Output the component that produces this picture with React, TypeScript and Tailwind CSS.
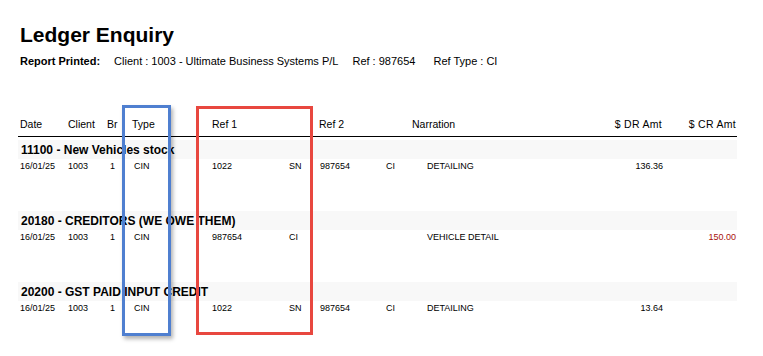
const headers = [
  { label: "Date", align: "left" },
  { label: "Client", align: "left" },
  { label: "Br", align: "left" },
  { label: "Type", align: "left" },
  { label: "Ref 1", align: "left" },
  { label: "Ref 2", align: "left" },
  { label: "Narration", align: "left" },
  { label: "$ DR Amt", align: "right" },
  { label: "$ CR Amt", align: "right" },
];

interface Entry {
  account: string;
  date: string;
  client: string;
  br: string;
  type: string;
  ref1: string;
  ref1Type: string;
  ref2: string;
  ref2Type: string;
  narration: string;
  dr: string;
  cr: string;
}

const entries: Entry[] = [
  {
    account: "11100 - New Vehicles stock",
    date: "16/01/25",
    client: "1003",
    br: "1",
    type: "CIN",
    ref1: "1022",
    ref1Type: "SN",
    ref2: "987654",
    ref2Type: "CI",
    narration: "DETAILING",
    dr: "136.36",
    cr: "",
  },
  {
    account: "20180 - CREDITORS (WE OWE THEM)",
    date: "16/01/25",
    client: "1003",
    br: "1",
    type: "CIN",
    ref1: "987654",
    ref1Type: "CI",
    ref2: "",
    ref2Type: "",
    narration: "VEHICLE DETAIL",
    dr: "",
    cr: "150.00",
  },
  {
    account: "20200 - GST PAID INPUT CREDIT",
    date: "16/01/25",
    client: "1003",
    br: "1",
    type: "CIN",
    ref1: "1022",
    ref1Type: "SN",
    ref2: "987654",
    ref2Type: "CI",
    narration: "DETAILING",
    dr: "13.64",
    cr: "",
  },
];

export default function App() {
  return (
    <div className="relative w-[763px] h-[356px] overflow-hidden bg-white text-black font-['Liberation_Sans',Arial,sans-serif]">
      <div className="pl-[20px] pt-[23px]">
        <h1 className="text-[21px] leading-[24px] font-bold">Ledger Enquiry</h1>
        <div className="mt-[8px] flex text-[11px] leading-[12px]">
          <span className="font-bold">Report Printed:</span>
          <span className="ml-[14px]">Client : 1003 - Ultimate Business Systems P/L</span>
          <span className="ml-[14px]">Ref : 987654</span>
          <span className="ml-[18px]">Ref Type : CI</span>
        </div>
      </div>

      <div className="ml-[18px] mt-[51px] w-[719px]">
        <div className="grid grid-cols-[48px_39px_25px_80px_107px_93px_188px_62px_74px] pl-[2px] pb-[6px] border-b border-black text-[10.5px] leading-[12px]">
          {headers.map((h) => (
            <span key={h.label} className={h.align === "right" ? "text-right tracking-[0.3px]" : ""}>
              {h.label}
            </span>
          ))}
        </div>

        <div className="mt-[3px]">
          {entries.map((e) => (
            <div key={e.account} className="h-[71px]">
              <div className="h-[19px] bg-[#f8f8f8] pl-[3px] pt-[1px] text-[12px] leading-[19px] font-bold">
                {e.account}
              </div>
              <div className="grid grid-cols-[48px_42px_24px_78px_77px_31px_66px_41px_173px_63px_73px] pl-[2px] h-[14px] text-[9px] leading-[14px]">
                <span>{e.date}</span>
                <span>{e.client}</span>
                <span>{e.br}</span>
                <span>{e.type}</span>
                <span>{e.ref1}</span>
                <span>{e.ref1Type}</span>
                <span>{e.ref2}</span>
                <span>{e.ref2Type}</span>
                <span>{e.narration}</span>
                <span className="text-right">{e.dr}</span>
                <span className="text-right text-[#a8120c]">{e.cr}</span>
              </div>
            </div>
          ))}
        </div>
      </div>

      {/* highlight boxes drawn over the report */}
      <div className="absolute left-[122px] top-[105px] w-[49px] h-[231px] border-[3px] border-[#4f7fd0] shadow-[2px_3px_4px_rgba(0,0,0,0.3)]" />
      <div className="absolute left-[196px] top-[106px] w-[117px] h-[229px] border-[3px] border-[#e8473f]" />
    </div>
  );
}
